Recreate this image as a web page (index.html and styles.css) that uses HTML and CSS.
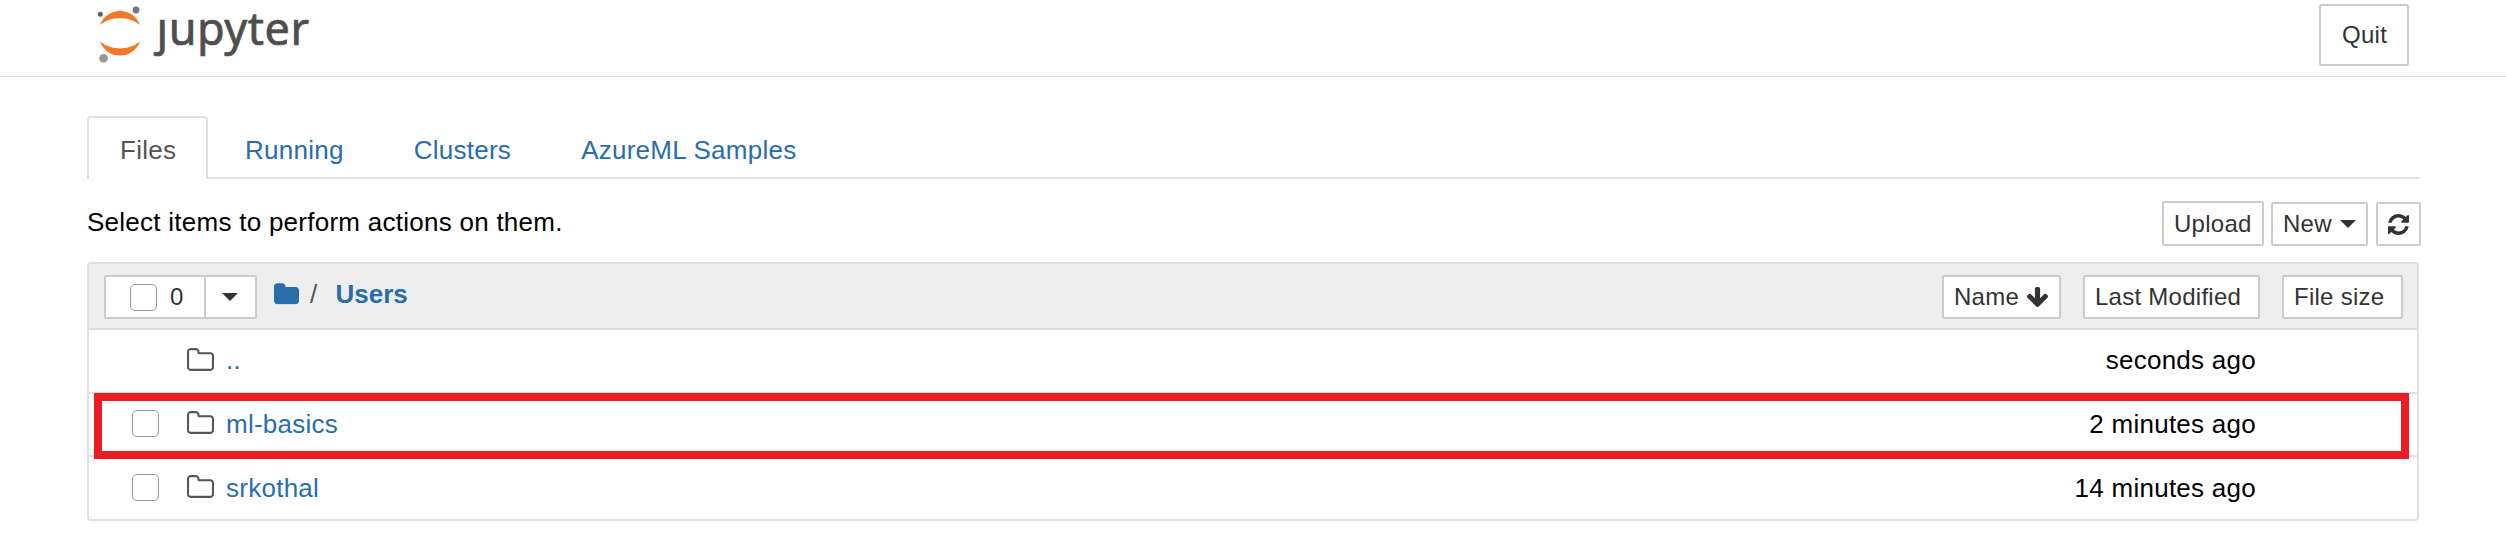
FILE: index.html
```html
<!DOCTYPE html>
<html lang="en">
<head>
<meta charset="utf-8">
<title>Jupyter</title>
<link rel="stylesheet" href="styles.css">
</head>
<body>
<svg class="sprite" aria-hidden="true">
  <symbol id="folder" viewBox="64 128 1664 1408"><path d="M1728 608v704q0 92-66 158t-158 66h-1216q-92 0-158-66t-66-158v-960q0-92 66-158t158-66h320q92 0 158 66t66 158v32h672q92 0 158 66t66 158z"/></symbol>
  <symbol id="folder-o" viewBox="64 128 1664 1408"><path d="M1600 1312v-704q0-40-28-68t-68-28h-704q-40 0-68-28t-28-68v-64q0-40-28-68t-68-28h-320q-40 0-68 28t-28 68v960q0 40 28 68t68 28h1216q40 0 68-28t28-68zm128-704v704q0 92-66 158t-158 66h-1216q-92 0-158-66t-66-158v-960q0-92 66-158t158-66h320q92 0 158 66t66 158v32h672q92 0 158 66t66 158z"/></symbol>
</svg>
<header class="header">
  <svg class="logo" width="260" height="72" viewBox="90 0 260 72">
    <path fill="#f37726" d="M100 25A21.3 21.3 0 0 1 140 25A32 32 0 0 0 100 25zM100 41.5A21.3 21.3 0 0 0 140 41.5A32 32 0 0 1 100 41.5z"/>
    <circle cx="136" cy="10" r="3.4" fill="#767677"/>
    <circle cx="100.3" cy="14.3" r="2.5" fill="#616262"/>
    <circle cx="103.6" cy="58.2" r="4.3" fill="#989798"/>
    <text class="wordmark" x="156.500" y="45" textLength="152.500" lengthAdjust="spacing">ȷupyter</text>
  </svg>
  <button class="btn quit">Quit</button>
</header>
<main class="container">
  <nav class="tabs">
    <a class="tab active">Files</a>
    <a class="tab">Running</a>
    <a class="tab">Clusters</a>
    <a class="tab">AzureML Samples</a>
  </nav>
  <div class="toolbar">
    <span class="hint">Select items to perform actions on them.</span>
    <div class="actions">
      <button class="btn upload">Upload</button>
      <button class="btn new">New<i class="caret"></i></button>
      <button class="btn refresh"><svg width="21" height="21" viewBox="128 128 1536 1536"><path d="M1639 1056q0 5-1 7-64 268-268 434.500t-478 166.500q-146 0-282.500-55t-243.500-157l-129 129q-19 19-45 19t-45-19-19-45v-448q0-26 19-45t45-19h448q26 0 45 19t19 45-19 45l-137 137q71 66 161 102t187 36q134 0 250-65t186-179q11-17 53-117 8-23 30-23h192q13 0 22.500 9.500t9.500 22.500zm25-800v448q0 26-19 45t-45 19h-448q-26 0-45-19t-19-45 19-45l138-138q-148-137-349-137-134 0-250 65t-186 179q-11 17-53 117-8 23-30 23h-199q-13 0-22.500-9.500t-9.500-22.500v-7q65-268 270-434.500t480-166.500q146 0 284 55.500t245 156.500l130-129q19-19 45-19t45 19 19 45z"/></svg></button>
    </div>
  </div>
  <section class="list">
    <div class="list-header">
      <div class="select">
        <button class="btn select-all"><span class="box"></span>0</button>
        <button class="btn select-menu"><i class="caret"></i></button>
      </div>
      <div class="crumbs">
        <svg class="crumb-icon" width="25" height="21.500"><use href="#folder"/></svg>
        <span class="slash">/</span>
        <a class="crumb">Users</a>
      </div>
      <div class="sorts">
        <button class="btn sort-name">Name<svg width="21" height="20" viewBox="117 128 1558 1483"><path d="M1675 832q0 53-37 90l-651 652q-39 37-91 37-53 0-90-37l-651-652q-38-36-38-90 0-53 38-91l74-75q39-37 91-37 53 0 90 37l294 294v-704q0-52 38-90t90-38h128q52 0 90 38t38 90v704l294-294q37-37 90-37 52 0 91 37l75 75q37 39 37 91z"/></svg></button>
        <button class="btn sort-modified">Last Modified</button>
        <button class="btn sort-size">File size</button>
      </div>
    </div>
    <div class="row">
      <span class="box hidden"></span>
      <svg class="icon" width="27" height="23"><use href="#folder-o"/></svg>
      <a class="name">..</a>
      <span class="time">seconds ago</span>
    </div>
    <div class="row selected">
      <span class="box"></span>
      <svg class="icon" width="27" height="23"><use href="#folder-o"/></svg>
      <a class="name">ml-basics</a>
      <span class="time">2 minutes ago</span>
      <div class="highlight"></div>
    </div>
    <div class="row">
      <span class="box"></span>
      <svg class="icon" width="27" height="23"><use href="#folder-o"/></svg>
      <a class="name">srkothal</a>
      <span class="time">14 minutes ago</span>
    </div>
  </section>
</main>
</body>
</html>
```

FILE: styles.css
```css
* { box-sizing: border-box; }
body {
  margin: 0;
  background: #fff;
  color: #000;
  font: 26px/36px "Liberation Sans", Arial, sans-serif;
  letter-spacing: 0.26px;
  overflow: hidden;
}
.sprite { display: none; }
a { color: #296eaa; }

.header {
  display: flex;
  justify-content: space-between;
  align-items: flex-start;
  height: 77px;
  padding: 0 97px 0 90px;
  border-bottom: 1px solid #dcdcdc;
}
.logo { display: block; overflow: visible; }
.wordmark {
  font: 45px "Noto Sans", "Open Sans", sans-serif;
  letter-spacing: 0;
  fill: #4e4e4e;
  stroke: #4e4e4e;
  stroke-width: 0.7px;
}

.btn {
  display: flex;
  align-items: center;
  height: 44px;
  margin: 0;
  padding: 0 0 0 10px;
  border: 2px solid #ccc;
  border-radius: 2px;
  background: #fff;
  color: #333;
  font: 24px/34px "Liberation Sans", Arial, sans-serif;
  letter-spacing: 0.26px;
  white-space: nowrap;
}
.btn svg { fill: #333; }
.quit { width: 90px; height: 62px; margin-top: 4px; padding: 0 0 0 21px; }
.caret {
  width: 0;
  height: 0;
  border: 8px solid transparent;
  border-top-color: #333;
  border-bottom: 0;
}

.container { width: 2332px; margin: 39px 0 0 87px; }
.tabs {
  display: flex;
  height: 63px;
  border-bottom: 2px solid #e0e0e0;
}
.tab {
  height: 61px;
  padding: 14px 31px 0;
  border: 2px solid transparent;
  border-bottom: 0;
  margin-right: 4px;
}
.tab.active {
  width: 121px;
  height: 63px;
  border-color: #e0e0e0;
  border-radius: 4px 4px 0 0;
  background: #fff;
  color: #555;
}

.toolbar {
  display: flex;
  justify-content: space-between;
  height: 83px;
  margin-right: -2px;
}
.hint { padding-top: 25px; }
.actions { display: flex; padding-top: 23px; }
.upload { width: 102px; height: 45px; margin-top: -1px; margin-right: 7px; }
.new { width: 97px; margin-right: 8px; }
.new .caret { margin-left: 8px; }
.refresh { width: 45px; padding-left: 10px; }

.list {
  height: 259px;
  border: 2px solid #e0e0e0;
  border-radius: 4px;
}
.list-header {
  display: flex;
  height: 66px;
  padding: 11px 14px 0 15px;
  border-bottom: 2px solid #ddd;
  background: #eee;
}
.select { display: flex; }
.select-all { width: 102px; padding-left: 24px; border-radius: 2px 0 0 2px; }
.select-all .box { margin-right: 13px; }
.select-menu { width: 53px; margin-left: -2px; padding-left: 16px; }
.box {
  flex: none;
  width: 27px;
  height: 27px;
  border: 1.500px solid #999;
  border-radius: 5px;
  background: #fff;
}
.crumbs { display: flex; padding: 1px 0 0 17px; }
.crumb-icon { margin-top: 7px; fill: #296eaa; }
.slash { margin-left: 11px; color: #555; }
.crumb { margin-left: 18px; font-weight: bold; letter-spacing: 0; }
.sorts { display: flex; margin-left: auto; }
.sort-name { width: 119px; margin-right: 22px; }
.sort-name svg { margin-left: 8px; }
.sort-modified { width: 177px; margin-right: 22px; }
.sort-size { width: 121px; }

.row {
  position: relative;
  display: flex;
  height: 64px;
  padding: 0 161px 0 43px;
  border-bottom: 2px solid #e0e0e0;
}
.row .box { margin-top: 17px; }
.icon { margin: 18px 0 0 28px; fill: #555; }
.name { margin: 12px 0 0 12px; }
.time { margin: 12px 0 0 auto; }
.hidden { visibility: hidden; }
.row.selected { height: 63px; }
.selected .box { margin-top: 16px; }
.selected .icon { margin-top: 17px; }
.row:last-child { height: 62px; border-bottom: 0; }
.row:last-child .name,
.row:last-child .time { margin-top: 13px; }
/* marker frame around the selected folder */
.highlight {
  position: absolute;
  left: 5px;
  top: -1px;
  width: 2315px;
  height: 66px;
  border: 8px solid #ed1c24;
}
.selected { z-index: 1; }
```
